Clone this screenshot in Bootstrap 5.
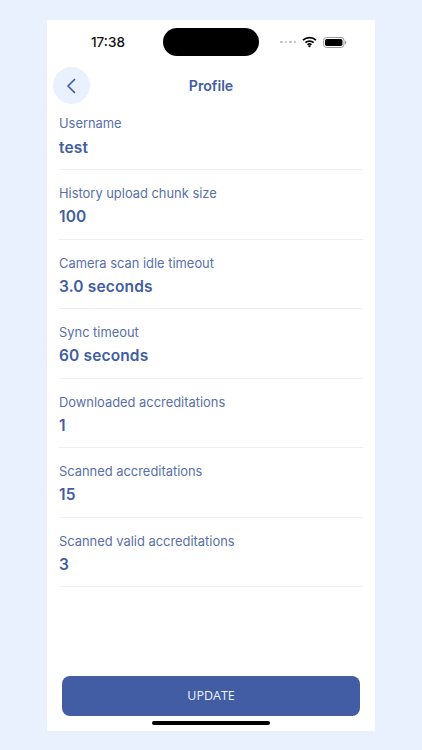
<!DOCTYPE html>
<html lang="en">
<head>
<meta charset="utf-8">
<title>Profile</title>
<link href="https://cdn.jsdelivr.net/npm/bootstrap@5.3.0/dist/css/bootstrap.min.css" rel="stylesheet">
<style>
html,body{height:100%;overflow:hidden}
body{background:#e8f1fd;font-family:Inter,"Liberation Sans",sans-serif;color:#425da3}
.screen{width:328px;height:711px;margin:20px 0 0 47px;background:#fff}
.statusbar{height:44px;padding:8px 18px 0 44px}
.clock{font-size:13.5px;font-weight:500;color:#111;width:72px;line-height:28px}
.island{width:96px;height:28px;border-radius:14px;background:#000}
.status-icons{margin-left:21px;height:28px;gap:6px}
.dots{gap:2px}
.dots i{width:2.5px;height:2.5px;border-radius:50%;background:#bbb;display:block}
.topbar{height:37px;margin-top:3px;padding-left:6px}
.backbtn{width:37px;height:37px;border-radius:50%;background:#e8f1fd;border:0;padding:0;flex:none}
.title{font-size:14.2px;font-weight:600;left:0;right:0;line-height:37px;color:#425da3}
.info{padding:0 12px;margin-top:11px}
.info-row{height:69.55px;border-bottom:1px solid #eef0f3;padding-top:15px}
.info-row:first-child{height:55px;padding-top:0}
.lbl{font-size:12.9px;line-height:18px;color:#5a70a8}
.val{font-size:15.5px;line-height:20px;font-weight:600;margin-top:4px;letter-spacing:.15px;color:#425da3}
.info-row:first-child .val{margin-top:5px}
.footer-area{padding:0 15px}
.updatebtn{height:40px;background:#425da3;color:#eef3fd;font-family:"Open Sans",sans-serif;font-size:12.5px;border-radius:8px;border:0}
.updatebtn:hover{background:#425da3;color:#eef3fd}
.homebar{width:118px;height:4px;border-radius:2px;background:#000;margin:5px auto 0}
.bottomgap{height:6px}
</style>
</head>
<body>
<main class="screen d-flex flex-column">
  <div class="statusbar d-flex align-items-start">
    <div class="clock">17:38</div>
    <div class="island"></div>
    <div class="status-icons d-flex align-items-center">
      <div class="dots d-flex"><i></i><i></i><i></i><i></i></div>
      <svg width="15" height="12" viewBox="0 0 15 12" aria-hidden="true"><path d="M1 4.2a9.3 9.3 0 0 1 13 0M3.4 6.7a5.9 5.9 0 0 1 8.2 0M5.6 8.9a2.7 2.7 0 0 1 3.8 0" fill="none" stroke="#000" stroke-width="1.7"/><path d="M7.5 11.6 5.9 9.9a2.4 2.4 0 0 1 3.2 0z"/></svg>
      <svg width="24" height="11" viewBox="0 0 24 11" aria-hidden="true"><rect x=".5" y=".5" width="20.5" height="10" rx="3" fill="none" stroke="#999"/><rect x="2" y="2" width="17.5" height="7" rx="1.8"/><path d="M22 3.7c.9.3 1.3 1 1.3 1.8s-.4 1.5-1.3 1.8z" fill="#999"/></svg>
    </div>
  </div>
  <div class="topbar position-relative d-flex align-items-center">
    <div class="title position-absolute text-center">Profile</div>
    <button class="backbtn position-relative d-flex align-items-center justify-content-center" type="button" aria-label="Back">
      <svg width="12" height="16" viewBox="1 0 12 16" aria-hidden="true"><path d="M9.5 1.5 3 8l6.5 6.5" fill="none" stroke="#425da3" stroke-width="1.7" stroke-linecap="round" stroke-linejoin="round"/></svg>
    </button>
  </div>
  <div class="info flex-grow-1">
    <div class="info-row"><div class="lbl">Username</div><div class="val">test</div></div>
    <div class="info-row"><div class="lbl">History upload chunk size</div><div class="val">100</div></div>
    <div class="info-row"><div class="lbl">Camera scan idle timeout</div><div class="val">3.0 seconds</div></div>
    <div class="info-row"><div class="lbl">Sync timeout</div><div class="val">60 seconds</div></div>
    <div class="info-row"><div class="lbl">Downloaded accreditations</div><div class="val">1</div></div>
    <div class="info-row"><div class="lbl">Scanned accreditations</div><div class="val">15</div></div>
    <div class="info-row"><div class="lbl">Scanned valid accreditations</div><div class="val">3</div></div>
  </div>
  <div class="footer-area">
    <button class="btn updatebtn w-100" type="button">UPDATE</button>
    <div class="homebar"></div>
  </div>
  <div class="bottomgap"></div>
</main>
</body>
</html>
